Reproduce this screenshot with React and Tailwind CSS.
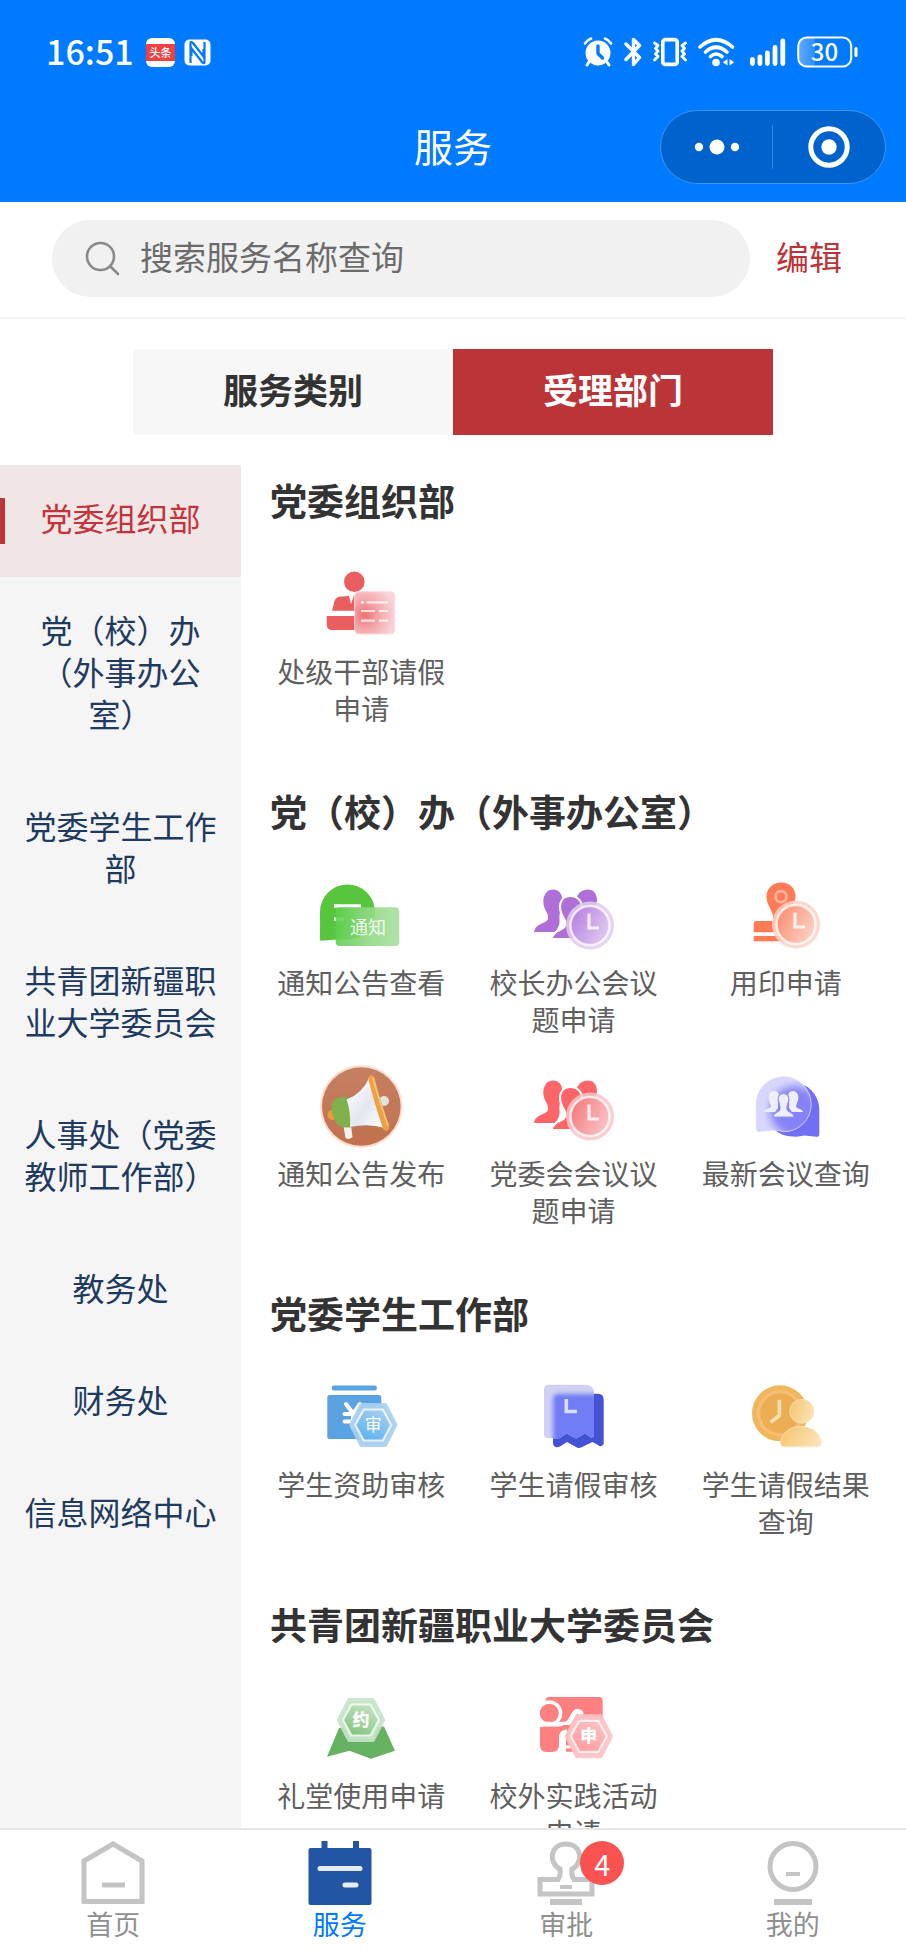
import React, { useState } from "react";

const AlarmIcon = () => (
  <svg width="30" height="30" viewBox="0 0 30 30" fill="none">
    <circle cx="15" cy="16" r="12.5" fill="white" />
    <path d="M2 6.5 Q4 3 8 1.5 M28 6.5 Q26 3 22 1.5" stroke="white" strokeWidth="2.6" strokeLinecap="round" />
    <path d="M6 25 L4 28 M24 25 L26 28" stroke="white" strokeWidth="3" strokeLinecap="round" />
    <path d="M15 9 V16.5 L19.5 21" stroke="#007aff" strokeWidth="3.4" strokeLinecap="round" strokeLinejoin="round" />
  </svg>
);

const BluetoothIcon = () => (
  <svg width="18" height="30" viewBox="0 0 18 30" fill="none">
    <path
      d="M2 7 L15.5 20.5 L9.5 27.5 V2.5 L15.5 8.5 L2 22.5"
      stroke="white"
      strokeWidth="3.4"
      strokeLinecap="round"
      strokeLinejoin="round"
    />
  </svg>
);

const VibrateIcon = () => (
  <svg width="34" height="30" viewBox="0 0 34 30" fill="none" stroke="white" strokeLinejoin="round" strokeLinecap="round">
    <rect x="9.8" y="2.6" width="14.4" height="24.8" rx="2.5" strokeWidth="3.6" />
    <path d="M1.5 6 L5 8.5 L2.5 11.5 L5 14 L2.5 17 L5 19.5 L1.5 23" strokeWidth="2.8" />
    <path d="M32.5 6 L29 8.5 L31.5 11.5 L29 14 L31.5 17 L29 19.5 L32.5 23" strokeWidth="2.8" />
  </svg>
);

const WifiIcon = () => (
  <svg width="37" height="30" viewBox="0 0 37 30" fill="none" stroke="white" strokeLinecap="round">
    <path d="M2 10 Q18 -4.5 34.5 10" strokeWidth="3.6" />
    <path d="M7.5 15 Q18 5.5 29 15" strokeWidth="3.6" />
    <path d="M12.5 19.5 Q18 14.5 24 19.5" strokeWidth="3.6" />
    <circle cx="18" cy="25.5" r="3.8" fill="white" stroke="none" />
    <path d="M29.5 22 V28.6 L24.8 25.3 Z M31.5 22 V28.6 L36.2 25.3 Z" fill="white" stroke="none" />
  </svg>
);

const SignalIcon = () => (
  <svg width="40" height="30" viewBox="0 0 40 30" stroke="white" strokeWidth="4.8" strokeLinecap="round">
    <path d="M6.4 22.5 V26.5 M13.9 20 V26.5 M21.4 16 V26.5 M29 10.5 V26.5 M36.8 4 V26.5" />
  </svg>
);

const BatteryIcon = () => (
  <svg width="62" height="40" viewBox="0 -4 62 40">
    <defs>
      <linearGradient id="battery" x1="0" x2="1">
        <stop offset="0" stopColor="#5fa9ff" />
        <stop offset="1" stopColor="#2a8dff" />
      </linearGradient>
    </defs>
    <path d="M18 2 H10 Q2 2 2 10 V22 Q2 30 10 30 H18 Z" fill="url(#battery)" />
    <rect x="1.2" y="1.5" width="53" height="29" rx="8.5" fill="none" stroke="white" strokeWidth="2" />
    <path d="M59 12.5 V19.5" stroke="white" strokeWidth="3" strokeLinecap="round" />
    <text x="27.5" y="24.5" textAnchor="middle" fontSize="24" fontWeight="500" fill="white">
      30
    </text>
  </svg>
);

const NewsAppIcon = () => (
  <svg width="29" height="29" viewBox="0 0 29 29">
    <rect width="29" height="29" rx="6" fill="white" />
    <rect y="6" width="29" height="17" fill="#f04142" />
    <text x="14.5" y="19" textAnchor="middle" fontSize="11" fontWeight="500" fill="white">
      头条
    </text>
  </svg>
);

const NfcIcon = () => (
  <svg width="27" height="27" viewBox="0 0 27 27" fill="none">
    <rect x="0.5" y="0.5" width="26" height="26" rx="5" fill="white" />
    <path d="M6.5 24 V4 Q6.5 1.5 9 4 L19.5 17.5 V10" stroke="#007aff" strokeWidth="2.2" />
    <path d="M20.5 3 V23 Q20.5 25.5 18 23 L7.5 9.5 V17" stroke="#007aff" strokeWidth="2.2" />
  </svg>
);

const SearchIcon = () => (
  <svg width="35" height="35" viewBox="0 0 35 35" fill="none" stroke="#8a8a8a" strokeWidth="2.6" strokeLinecap="round">
    <circle cx="15.5" cy="15.5" r="13.5" />
    <path d="M25 25 L33 33" />
  </svg>
);

const IconBox = ({ children }) => (
  <svg width="84" height="84" viewBox="0 0 84 84" fill="none" aria-hidden="true">
    {children}
  </svg>
);

// frosted clock that sits on the lower right of several icons
const Clock = ({ id, cx, cy, strong, soft }) => (
  <>
    <defs>
      <linearGradient id={id} x1="0" y1="0.2" x2="1" y2="0.7">
        <stop offset="0" stopColor={strong} />
        <stop offset="1" stopColor={soft} />
      </linearGradient>
    </defs>
    <circle cx={cx} cy={cy} r="24" fill={soft} fillOpacity="0.85" />
    <circle cx={cx} cy={cy} r="19.5" fill={`url(#${id})`} stroke="white" strokeOpacity="0.75" strokeWidth="2.4" />
    <path
      d={`M${cx - 1} ${cy - 12} V${cy + 2.5} H${cx + 9}`}
      stroke="white"
      strokeOpacity="0.8"
      strokeWidth="3.2"
    />
  </>
);

const Hexagon = ({ id, cx, cy, strong, soft, label, bold }) => (
  <>
    <defs>
      <linearGradient id={id} x1="0.2" y1="1" x2="0.8" y2="0">
        <stop offset="0" stopColor={strong} />
        <stop offset="1" stopColor={soft} />
      </linearGradient>
    </defs>
    <path
      d={`M${cx - 21.5} ${cy} L${cx - 11.5} ${cy - 19.5} H${cx + 11.5} L${cx + 21.5} ${cy} L${cx + 11.5} ${cy + 19.5} H${cx - 11.5} Z`}
      fill={soft}
      fillOpacity="0.9"
      stroke={soft}
      strokeOpacity="0.9"
      strokeWidth="5"
      strokeLinejoin="round"
    />
    <path
      d={`M${cx - 18} ${cy} L${cx - 9.5} ${cy - 15.5} H${cx + 9.5} L${cx + 18} ${cy} L${cx + 9.5} ${cy + 15.5} H${cx - 9.5} Z`}
      fill={`url(#${id})`}
      stroke="white"
      strokeOpacity="0.75"
      strokeWidth="2.2"
      strokeLinejoin="round"
    />
    <text x={cx} y={cy + 6} textAnchor="middle" fontSize="17" fontWeight={bold ? 900 : 400} fill="white">
      {label}
    </text>
  </>
);

const LeaveIcon = () => (
  <IconBox>
    <defs>
      <radialGradient id="leave" cx="0.25" cy="0.55" r="0.75">
        <stop offset="0" stopColor="#ee7173" />
        <stop offset="0.45" stopColor="#f4a5a9" />
        <stop offset="1" stopColor="#f9d3d8" />
      </radialGradient>
    </defs>
    <circle cx="35.3" cy="18.7" r="10.3" fill="#e95f60" />
    <path d="M13 47.7 L15.5 38 Q17 33.5 22 33.5 L30 33 L32 41 L35 32.5 H44 V47.7 Z" fill="#e95f60" />
    <path d="M7.7 53 H44 V67 H13 Q7.7 67 7.7 61 Z" fill="#e95f60" />
    <rect x="35.7" y="28.7" width="40" height="42.3" rx="4" fill="url(#leave)" stroke="#fbdcdf" strokeWidth="1" />
    <circle cx="43.5" cy="39.3" r="1.4" fill="white" />
    <path d="M47.7 39.3 H69 M42 48 H56 M60 48 H69 M42 57.7 H56 M60 57.7 H69" stroke="white" strokeOpacity="0.75" strokeWidth="2.2" />
  </IconBox>
);

const NoticeIcon = () => (
  <IconBox>
    <defs>
      <linearGradient id="notice" x1="0" x2="1">
        <stop offset="0" stopColor="#5fce4c" />
        <stop offset="0.5" stopColor="#8fd983" />
        <stop offset="1" stopColor="#a9dfa0" />
      </linearGradient>
    </defs>
    <path d="M1 38 A27.5 27.5 0 1 1 28.5 65.5 Q12 65.5 3 66.8 Q0.5 67 0.8 64 Q1.2 60 1 38 Z" fill="#57c63e" />
    <path d="M15 32 H42 M15 45 H25" stroke="white" strokeWidth="3.4" />
    <rect x="16.7" y="33.3" width="63.6" height="38.7" rx="4" fill="url(#notice)" fillOpacity="0.9" />
    <text x="49" y="60" textAnchor="middle" fontSize="18" fill="white" fillOpacity="0.9">
      通知
    </text>
  </IconBox>
);

const MeetingIcon = ({ id, color, strong, soft }) => (
  <IconBox>
    <path
      d="M21.5 15.5 C29 15.5 32.5 21 31 30 C30 35 28 39 28.5 45 C29 51 27 54 24 58 L3 58 C3.5 53 8 50.5 13 48.5 C18 46.5 18 43 15.5 38 C12 32 11.5 26 13.5 21.5 C15 17.5 18 15.5 21.5 15.5 Z"
      fill={color}
    />
    <path d="M56.5 15.5 C63 15.5 66 20 66 27 L60 44 L44 32 C44 24 48 15.5 56.5 15.5 Z" fill={color} />
    <path
      d="M39 22 C47.5 22 51.5 28 51 35 L62 65 H20.7 C21 60 25 57.5 29.5 55.5 C35 53 35.5 49 32.5 44 C29.5 39 28 34 29.5 29 C31 24.5 34.5 22 39 22 Z"
      fill={color}
      stroke="white"
      strokeWidth="2.2"
    />
    <path d="M18 66.5 V65 H64 V69 H18 Z" fill="white" />
    <Clock id={id} cx={59} cy={51.5} strong={strong} soft={soft} />
  </IconBox>
);

const StampIcon = () => (
  <IconBox>
    <path d="M37 8.5 C46 8.5 52 15 51.5 23 C51 30 44 36 46 47 H62 V58.3 H9.7 V50 Q9.7 47 13 47 H29 C31 38 22.5 32 22.5 23 C22.5 15 28 8.5 37 8.5 Z" fill="#ff7a56" />
    <rect x="9.7" y="62" width="46" height="5.3" fill="#ff7a56" />
    <circle cx="37" cy="22.7" r="5.5" stroke="#ffb59f" strokeWidth="2.8" />
    <Clock id="stamp" cx={52} cy={50.5} strong="#fb8e70" soft="#fbd2c6" />
  </IconBox>
);

const MegaphoneIcon = () => (
  <IconBox>
    <defs>
      <linearGradient id="horn" x1="0" y1="0" x2="1" y2="1">
        <stop offset="0" stopColor="#ffffff" />
        <stop offset="0.55" stopColor="#e3e8ef" />
        <stop offset="1" stopColor="#ffffff" />
      </linearGradient>
      <linearGradient id="horn-bg" x1="0" y1="0" x2="0" y2="1">
        <stop offset="0" stopColor="#c58063" />
        <stop offset="1" stopColor="#c1714d" />
      </linearGradient>
    </defs>
    <circle cx="42.3" cy="41.5" r="41.3" fill="#fbdccd" />
    <circle cx="42.3" cy="41.5" r="39.3" fill="url(#horn-bg)" />
    <circle cx="65" cy="36" r="5" fill="#dfe3de" />
    <circle cx="13.5" cy="50" r="5" fill="#ee9a3c" />
    <path d="M24 58 L31.5 57 L33.5 72 Q30 75.5 26.5 73 Z" fill="#f1f1f1" />
    <path d="M14 36 Q20 31 29 32 L33 62 Q23 64 18 59 Q10 47 14 36 Z" fill="#7fb04c" />
    <path d="M27.5 34.5 Q43 29 50 13 L66 63 Q49 58 31 62 Q32 47 27.5 34.5 Z" fill="url(#horn)" />
    <path d="M52.5 13.5 Q58 36 67 62.5" stroke="#f0a044" strokeWidth="6.5" strokeLinecap="round" />
    <path d="M54 13 Q60 35 69 60" stroke="#f9c67c" strokeWidth="1.6" strokeLinecap="round" />
  </IconBox>
);

const chatShape =
  "M12.2 39.3 A27.5 27.5 0 1 1 39.7 66.8 Q34 65 28 65 L15 66.5 Q12.2 67 12.4 63.5 Z";

const ChatGroupIcon = () => (
  <IconBox>
    <defs>
      <clipPath id="chat-clip">
        <path d={chatShape} />
      </clipPath>
      <filter id="chat-blur">
        <feGaussianBlur stdDeviation="4" />
      </filter>
    </defs>
    <path d="M75.3 44 V69 Q75.5 72 72.5 71.8 L60 70.5 Q55 72 49 71.5 A27 27 0 1 1 75.3 44 Z" fill="#716ff3" />
    <path d={chatShape} fill="#d8d7fb" />
    <g clipPath="url(#chat-clip)">
      <circle cx="51" cy="46" r="25" fill="#8482f6" filter="url(#chat-blur)" />
    </g>
    <path d={chatShape} stroke="#d9d8fd" strokeWidth="0.8" />
    <g fill="#eeeefe">
      <path d="M30 26 C34.5 26 36 30 34.5 35 C33.5 39 34 41 34 43 L31 47 H20 C21 43 27 44 27 41 C25 36 24 33 25 30 C26 27 28 26 30 26 Z" />
      <path d="M49 26 C44.5 26 43 30 44.5 35 C45.5 39 45 41 45 43 L48 47 H59 C58 43 52 44 52 41 C54 36 55 33 54 30 C53 27 51 26 49 26 Z" />
      <path d="M39.5 28.5 C44.5 28.5 46 33 44 38 C42.5 42 42 45 45 46.5 C48 48 50 49 50 52 H29 C29 49 31 48 34 46.5 C37 45 36.5 42 35 38 C33 33 34.5 28.5 39.5 28.5 Z" stroke="#9492f6" strokeWidth="1.2" />
    </g>
  </IconBox>
);

const AidIcon = () => (
  <IconBox>
    <rect x="12.8" y="9.5" width="45" height="5" rx="2" fill="#5aa2e2" />
    <rect x="8.3" y="19" width="54" height="44" rx="2.5" fill="#5aa2e2" />
    <path d="M27 28 L34 37.5 L41 28 M34 37.5 V51 M25.5 38 H42 M25.5 45.5 H42" stroke="white" strokeWidth="4" strokeLinecap="round" />
    <Hexagon id="aid" cx={54.3} cy={49} strong="#5cb2ee" soft="#a9cff0" label="审" />
  </IconBox>
);

const receiptShape =
  "M18 8.7 H55 Q63 9 63 17 V58 Q62.5 63 59 61 L54 57.5 L45 62.5 L35.5 57.5 L29 62 Q24 63 20 62 H17 Q13 62 13 58 V14 Q13 8.7 18 8.7 Z";

const ReceiptIcon = () => (
  <IconBox>
    <defs>
      <clipPath id="receipt-clip">
        <path d={receiptShape} />
      </clipPath>
      <filter id="receipt-blur">
        <feGaussianBlur stdDeviation="2" />
      </filter>
    </defs>
    <path d="M28 17.7 H67 Q72.7 17.7 72.7 24 V68 Q70 72 67 69 L61.5 66 L50 71.5 Q47.5 72.5 45 71 L36 66 L29 70.5 Q24 73 22 68 V24 Z" fill="#4452d4" />
    <path d={receiptShape} fill="#d0d1f2" />
    <g clipPath="url(#receipt-clip)">
      <rect x="22" y="18" width="56" height="60" rx="5" fill="#6f7df5" filter="url(#receipt-blur)" />
    </g>
    <path d="M35.3 23 V35.5 H46" stroke="#d9ddff" strokeWidth="3.6" />
  </IconBox>
);

const LeaveResultIcon = () => (
  <IconBox>
    <defs>
      <linearGradient id="person" x1="0" y1="0.3" x2="1" y2="0.6">
        <stop offset="0" stopColor="#f6c66f" />
        <stop offset="1" stopColor="#fae3b8" />
      </linearGradient>
    </defs>
    <circle cx="36" cy="37.3" r="28" fill="#efb65c" />
    <circle cx="36" cy="37.3" r="21.5" fill="#ecae54" stroke="#f7bd72" strokeWidth="3.4" />
    <path d="M35.4 23.7 V39.5 L26.5 46.3" stroke="#fae0ae" strokeWidth="3.6" />
    <circle cx="57.8" cy="35.3" r="12" fill="url(#person)" stroke="#fae3b5" strokeWidth="0.8" />
    <path d="M36.5 66 C38 56 47 50.5 57 50.5 C68 50.5 76 57 77.3 66 Q77.5 70.8 73 70.8 H41 Q36 70.8 36.5 66 Z" fill="url(#person)" stroke="#fbe8c4" strokeWidth="0.8" />
  </IconBox>
);

const HallIcon = () => (
  <IconBox>
    <path d="M20 41 L65 39.5 L76 63.7 L52 71.8 L30.5 63.7 L8 69.8 Z" fill="#67b163" />
    <Hexagon id="hall" cx={42} cy={33} strong="#80c47b" soft="#c5e3c7" label="约" bold />
  </IconBox>
);

const PracticeIcon = () => (
  <IconBox>
    <path d="M18 10 H68 Q71.7 10 71.7 14 V64.7 H35 V44 H9 V40 L16 38 Q14.5 14 14.5 14 Q14.5 10 18 10 Z" fill="#ff8080" />
    <circle cx="18.3" cy="26.3" r="13" fill="white" />
    <circle cx="18.3" cy="26.3" r="9.5" fill="#ff8080" />
    <path d="M9 37.2 H34 Q37 37 39 34 L43 27 Q46 22 50 26" stroke="white" strokeWidth="5" strokeLinecap="round" />
    <path d="M14 39.7 H28 L33 38 H46 Q42 42 36 42 Q29 43 28 49 V58 Q28 65 21 65 H15 Q9 65 9 58 V45 Q9 39.7 14 39.7 Z" fill="#ff8080" />
    <path d="M30.5 67 V50 Q31 45 36 44.5" stroke="white" strokeWidth="4.5" />
    <path d="M34 60 H42" stroke="white" strokeWidth="3" />
    <Hexagon id="practice" cx={57.8} cy={49.3} strong="#ff9a9a" soft="#fbc3c6" label="申" bold />
  </IconBox>
);

const PurpleMeeting = () => <MeetingIcon id="meet-a" color="#b06fd6" strong="#b57fe0" soft="#e0cbf1" />;
const RedMeeting = () => <MeetingIcon id="meet-b" color="#fd6668" strong="#f5787c" soft="#f9c4c7" />;

const HomeIcon = () => (
  <svg width="64" height="64" viewBox="0 0 64 64" fill="none" stroke="#c4c4c4" strokeWidth="5">
    <path d="M3 20 L32 3 L61 20 V60.5 H3 Z" />
    <path d="M21 44 H44" />
  </svg>
);

const ServiceIcon = () => (
  <svg width="64" height="64" viewBox="0 0 64 64" fill="none">
    <path d="M16.5 0 V10 M48 0 V10" stroke="#2454a4" strokeWidth="6" />
    <rect x="0.5" y="7" width="63" height="57" rx="2" fill="#2454a4" />
    <path d="M12 27.5 H52 M37 44 H48" stroke="#e6ecf8" strokeWidth="5" strokeLinecap="round" />
  </svg>
);

const ApproveIcon = () => (
  <svg width="64" height="64" viewBox="0 0 64 64" fill="none" stroke="#c4c4c4" strokeWidth="5">
    <path d="M6 38.5 H24 Q27 34 26 28 C14 22 16 3 32 3 C48 3 50 22 38 28 Q37 34 40 38.5 H58 V53 H6 Z" />
    <path d="M26 46 H38" strokeWidth="4" />
    <path d="M16 61 H48" strokeWidth="6" />
  </svg>
);

const MineIcon = () => (
  <svg width="64" height="64" viewBox="0 0 64 64" fill="none" stroke="#c4c4c4" strokeWidth="5">
    <circle cx="32" cy="25.5" r="23" />
    <path d="M25 33 H39" strokeWidth="4" />
    <path d="M13 61 H51" strokeWidth="6" />
  </svg>
);

const departments = [
  "党委组织部",
  "党（校）办（外事办公室）",
  "党委学生工作部",
  "共青团新疆职业大学委员会",
  "人事处（党委教师工作部）",
  "教务处",
  "财务处",
  "信息网络中心",
];

const sections = [
  {
    title: "党委组织部",
    items: [{ name: "处级干部请假申请", Icon: LeaveIcon }],
  },
  {
    title: "党（校）办（外事办公室）",
    items: [
      { name: "通知公告查看", Icon: NoticeIcon },
      { name: "校长办公会议题申请", Icon: PurpleMeeting },
      { name: "用印申请", Icon: StampIcon },
      { name: "通知公告发布", Icon: MegaphoneIcon },
      { name: "党委会会议议题申请", Icon: RedMeeting },
      { name: "最新会议查询", Icon: ChatGroupIcon },
    ],
  },
  {
    title: "党委学生工作部",
    items: [
      { name: "学生资助审核", Icon: AidIcon },
      { name: "学生请假审核", Icon: ReceiptIcon },
      { name: "学生请假结果查询", Icon: LeaveResultIcon },
    ],
  },
  {
    title: "共青团新疆职业大学委员会",
    items: [
      { name: "礼堂使用申请", Icon: HallIcon },
      { name: "校外实践活动申请", Icon: PracticeIcon },
    ],
  },
];

const navItems = [
  { name: "首页", Icon: HomeIcon },
  { name: "服务", Icon: ServiceIcon },
  { name: "审批", Icon: ApproveIcon, badge: 4 },
  { name: "我的", Icon: MineIcon },
];

const tabs = ["服务类别", "受理部门"];

const Header = () => (
  <header className="bg-[#007aff] text-white pt-8 pb-[18px]">
    <div className="flex items-center justify-between h-10 pl-[46px] pr-[47px]">
      <div className="flex items-center">
        <span className="text-[34px] leading-[38px] pb-[2px] font-medium mr-3">16:51</span>
        <span className="mr-[9px]">
          <NewsAppIcon />
        </span>
        <NfcIcon />
      </div>
      <div className="flex items-center gap-[11px]">
        <AlarmIcon />
        <BluetoothIcon />
        <VibrateIcon />
        <WifiIcon />
        <SignalIcon />
        <BatteryIcon />
      </div>
    </div>
    <div className="grid grid-cols-3 items-center mt-[38px] px-5">
      <h1 className="col-start-2 pb-1 text-[39px] leading-[70px] text-center">服务</h1>
      <div className="justify-self-end flex items-center w-[226px] h-[74px] rounded-full bg-[#0062cc] border border-[#3d94f2]">
        <button type="button" aria-label="更多" className="flex-1 flex justify-center">
          <svg width="46" height="16" viewBox="0 0 46 16" fill="white">
            <circle cx="5" cy="8" r="4.2" />
            <circle cx="23" cy="8" r="7.5" />
            <circle cx="41" cy="8" r="4.2" />
          </svg>
        </button>
        <span className="w-px h-11 bg-[#2f83dd]" />
        <button type="button" aria-label="关闭" className="flex-1 flex justify-center">
          <svg width="42" height="42" viewBox="0 0 42 42" fill="none">
            <circle cx="21" cy="21" r="18.2" stroke="white" strokeWidth="5" />
            <circle cx="21" cy="21" r="7.7" fill="white" />
          </svg>
        </button>
      </div>
    </div>
  </header>
);

const App = () => {
  const [keyword, setKeyword] = useState("");
  const [tab, setTab] = useState("受理部门");
  const [active, setActive] = useState("党委组织部");

  return (
    <div
      lang="zh-CN"
      className="h-screen flex flex-col overflow-hidden bg-white text-[#333333] font-['Noto_Sans_CJK_SC',sans-serif]"
    >
      <Header />

      <form
        className="flex items-center pt-[18px] pb-5 pl-[52px] pr-16 border-b-2 border-[#f6f6f6]"
        onSubmit={(e) => e.preventDefault()}
      >
        <label className="flex-1 flex items-center h-[77px] pl-[33px] pr-8 rounded-full bg-[#f1f1f1]">
          <SearchIcon />
          <input
            type="text"
            aria-label="搜索服务名称查询"
            className="flex-1 min-w-0 ml-5 h-[54px] pb-[6px] text-[33px] leading-[48px] bg-transparent outline-none placeholder:text-[#6b6b6b]"
            placeholder="搜索服务名称查询"
            value={keyword}
            onChange={(e) => setKeyword(e.target.value)}
          />
        </label>
        <button type="button" className="ml-[26px] pb-[6px] text-[33px] leading-[48px] text-[#bb3438]">
          编辑
        </button>
      </form>

      <div className="flex px-[133px] py-[30px]">
        {tabs.map((name) => (
          <button
            key={name}
            type="button"
            onClick={() => setTab(name)}
            className={`flex-1 pt-[14px] pb-5 text-[35px] leading-[52px] font-bold ${
              tab === name ? "bg-[#bb3438] text-white" : "bg-[#f7f7f7] text-[#333333]"
            }`}
          >
            {name}
          </button>
        ))}
      </div>

      <div className="flex-1 min-h-0 flex">
        <aside className="w-[241px] shrink-0 bg-[#f5f5f5] overflow-y-auto [scrollbar-width:none]">
          {departments.map((name) => (
            <button
              key={name}
              type="button"
              onClick={() => setActive(name)}
              className={`relative block w-full px-5 pt-[31px] pb-[39px] text-[32px] leading-[42px] text-center ${
                active === name ? "bg-[#f0e6e6] text-[#c5323c]" : "text-[#1f3a60]"
              }`}
            >
              {active === name && (
                <span className="absolute left-0 top-1/2 -translate-y-1/2 w-[5px] h-[46px] bg-[#bb3438]" />
              )}
              {name}
            </button>
          ))}
        </aside>

        <main className="flex-1 min-w-0 px-[14px] pt-[11px] flex flex-col gap-[60px] overflow-y-auto [scrollbar-width:none]">
          {sections.map((section) => (
            <section key={section.title} className="shrink-0">
              <h2 className="pl-[15px] text-[37px] leading-[48px] font-bold">{section.title}</h2>
              <div className="grid grid-cols-3 gap-y-[27px] mt-[39px]">
                {section.items.map(({ name, Icon }) => (
                  <button key={name} type="button" className="flex flex-col items-center gap-[6px] px-5">
                    <Icon />
                    <span className="text-[28px] leading-[37px] text-[#5f5f5f]">{name}</span>
                  </button>
                ))}
              </div>
            </section>
          ))}
        </main>
      </div>

      <nav className="grid grid-cols-4 border-t-2 border-[#e6e6e6] bg-white pt-[11px] pb-3">
        {navItems.map(({ name, Icon, badge }) => (
          <a key={name} href="#" className="flex flex-col items-center">
            <span className="relative">
              <Icon />
              {badge && (
                <span className="absolute left-[46px] top-0 w-11 h-11 rounded-full bg-[#fa5151] text-white text-[29px] leading-[44px] text-center">
                  {badge}
                </span>
              )}
            </span>
            <span className={`text-[27px] leading-[38px] ${name === "服务" ? "text-[#007aff]" : "text-[#8f8f8f]"}`}>
              {name}
            </span>
          </a>
        ))}
      </nav>
    </div>
  );
};

export default App;
